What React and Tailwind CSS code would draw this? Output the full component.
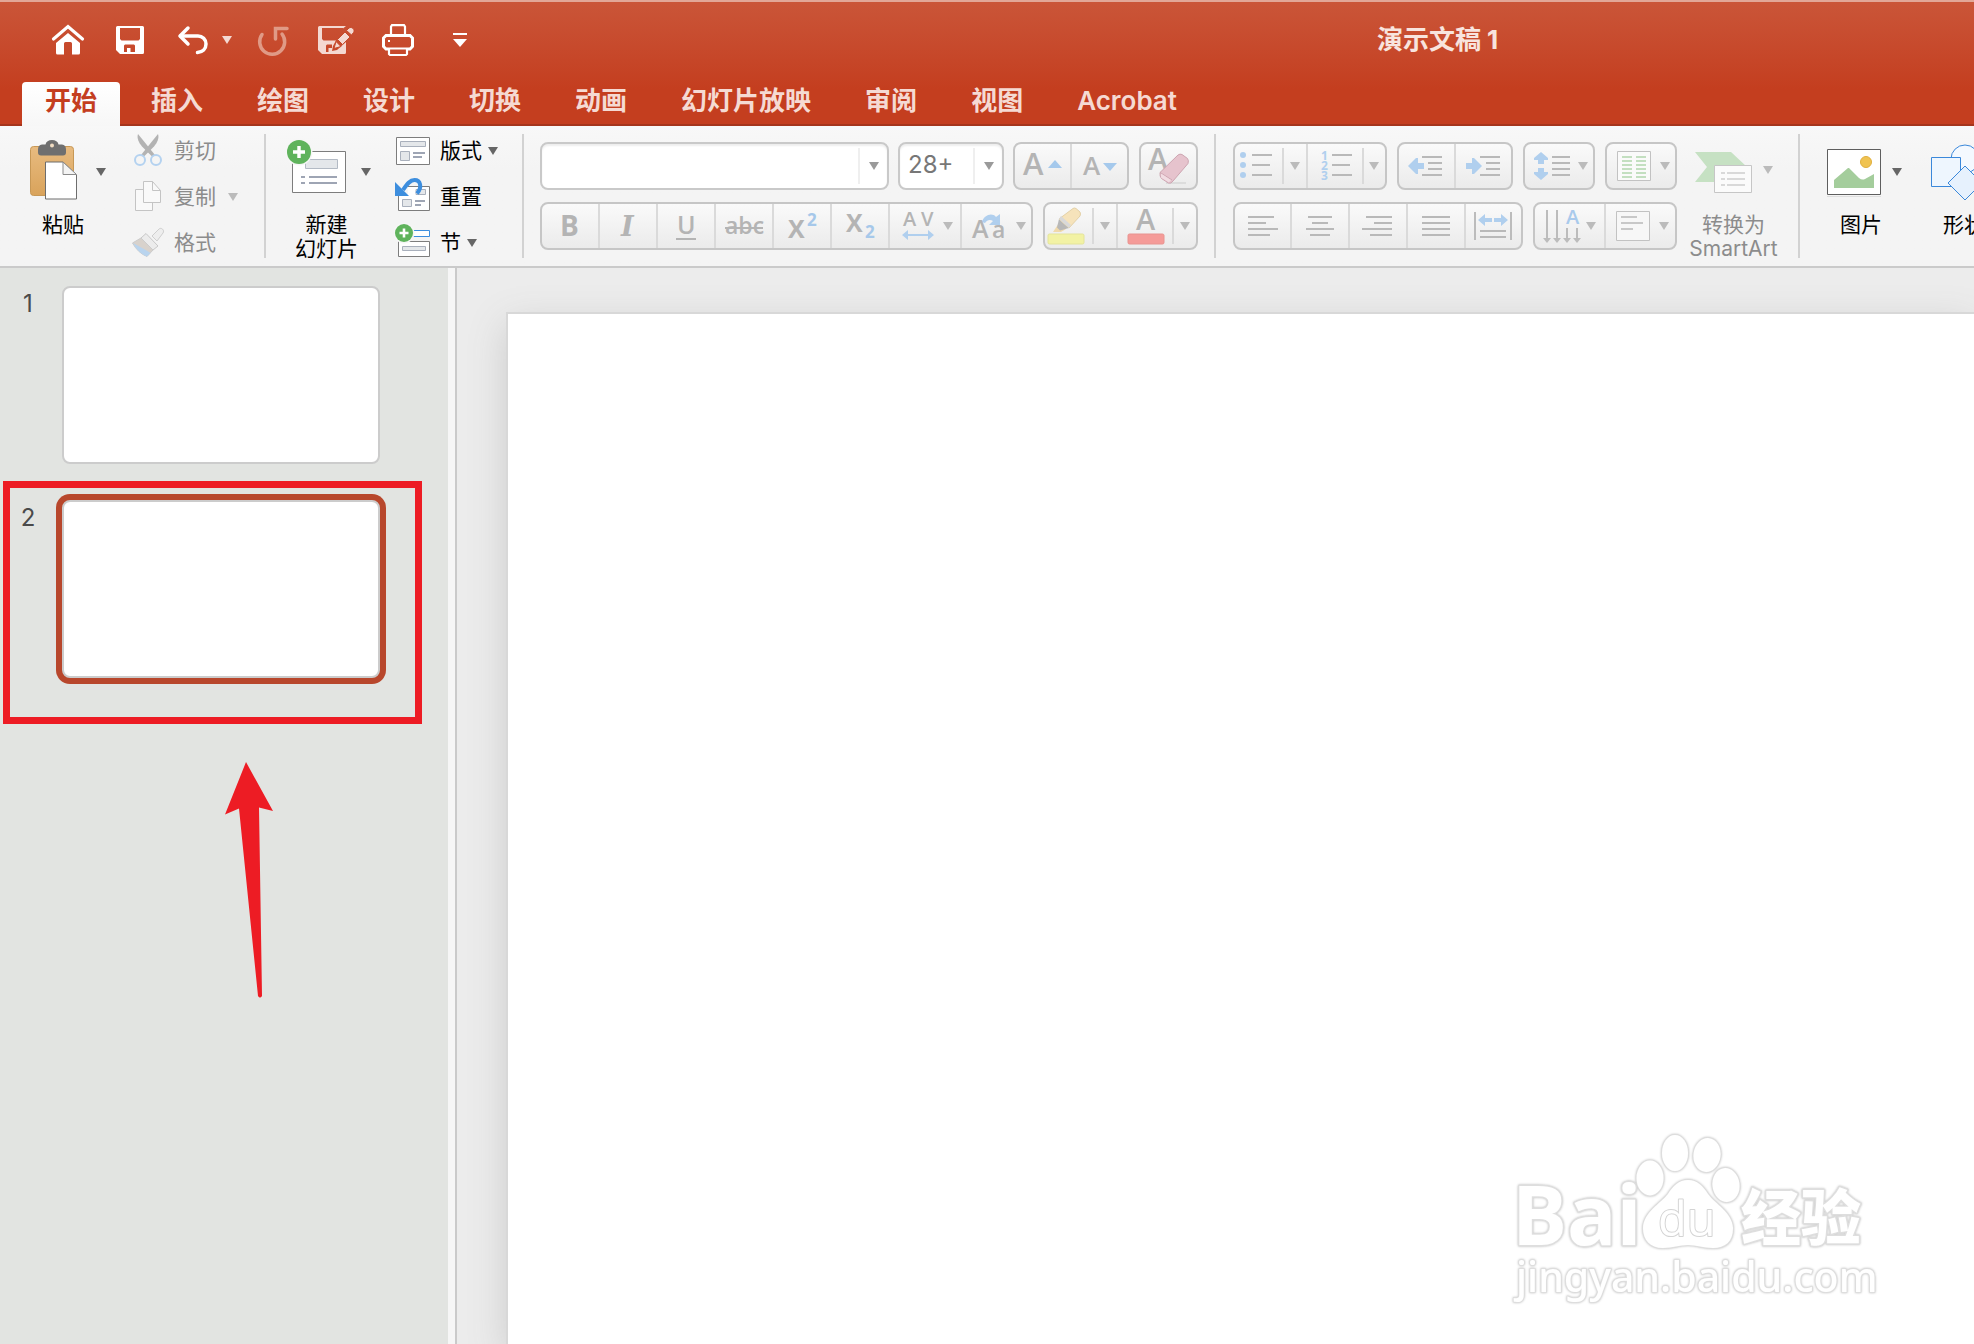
import React, { useState } from 'react'

const TABS = ['开始', '插入', '绘图', '设计', '切换', '动画', '幻灯片放映', '审阅', '视图', 'Acrobat']

const GREY = '#b4b4b4'
const BLUE = '#b0cfee'
const SANS = '"Open Sans", "Liberation Sans", sans-serif'

function Caret({ className = 'text-[#666666]' }) {
  return (
    <svg width="10" height="8" viewBox="0 0 10 8" className={'shrink-0 ' + className}>
      <path d="M0 0h10L5 8z" fill="currentColor" />
    </svg>
  )
}

function Icon({ w, h = 44, children }) {
  return (
    <svg width={w} height={h} viewBox={`0 0 ${w} ${h}`} fill="none" className="shrink-0 overflow-visible" aria-hidden="true">
      {children}
    </svg>
  )
}

function Letter({ x, y, size, color = GREY, weight = 600, family = SANS, children, ...rest }) {
  return (
    <text x={x} y={y} fontSize={size} fill={color} fontWeight={weight} fontFamily={family} {...rest}>
      {children}
    </text>
  )
}

// horizontal strokes given as [x1, x2, y]
function Lines({ rows, color = '#b9b9b9', width = 2 }) {
  return rows.map(([x1, x2, y], i) => (
    <path key={i} d={`M${x1} ${y}H${x2}`} stroke={color} strokeWidth={width} />
  ))
}

/* ---------- title bar ---------- */

function HomeIcon() {
  return (
    <Icon w={32} h={32}>
      <path d="M1.5 15 16 2.5 30.5 15" stroke="white" strokeWidth="3.2" strokeLinecap="round" />
      <path d="M4 19 16 9l12 10v10a1.500 1.500 0 0 1-1.500 1.500H20V19.500a1.500 1.500 0 0 0-1.500-1.500h-5a1.500 1.500 0 0 0-1.500 1.500v11H5.500A1.500 1.500 0 0 1 4 29z" fill="white" />
    </Icon>
  )
}

function SaveIcon() {
  return (
    <Icon w={28} h={28}>
      <path fillRule="evenodd" fill="white" d="M1.500 0h25A1.500 1.500 0 0 1 28 1.500v25a1.500 1.500 0 0 1-1.500 1.500H4l-4-4V1.500A1.500 1.500 0 0 1 1.500 0zM4 2v11l1.500 1.500h17L24 13V2zM8 26h3v-4h3.500v4H19v-6.500L18 18.500H9l-1 1z" />
    </Icon>
  )
}

function UndoIcon() {
  return (
    <Icon w={30} h={30}>
      <path d="M10 3 2 11l8 8" stroke="white" strokeWidth="3.500" strokeLinecap="round" strokeLinejoin="round" />
      <path d="M2.500 11H20a8 8 0 0 1 8 8c0 5-3.500 8-8.500 8.500" stroke="white" strokeWidth="3.500" strokeLinecap="round" />
    </Icon>
  )
}

function RedoIcon() {
  return (
    <Icon w={30} h={30}>
      <path d="M4 9.500A12.500 12.500 0 1 0 24 9M29 3.500H17.500V14" stroke="#e09a86" strokeWidth="3.500" strokeLinecap="round" />
    </Icon>
  )
}

function SaveAsIcon() {
  return (
    <Icon w={36} h={28}>
      <path fillRule="evenodd" fill="#f4d9d2" d="M1.500 0H28l-3 2.500V2H4v11l1.500 1.500H18L15 20l-1 5 5-1 9-8v10.500a1.500 1.500 0 0 1-1.500 1.500H4l-4-4V1.500A1.500 1.500 0 0 1 1.500 0zM8 26h2.500v-4H14v-3.500H9l-1 1z" />
      <path d="M16 22.500 18 15.500l5 5zM19.500 13.500 27 6l5 5-7.500 7.500zM28.500 4.500 31 2c1.500-1 3-.5 4 .5s1.500 2.500.5 4L33.500 9z" fill="#f4d9d2" stroke="#c64b2c" strokeWidth="1" />
    </Icon>
  )
}

function PrintIcon() {
  return (
    <Icon w={32} h={32}>
      <path d="M9 11V2.500L10 1.200h12l1 1.300V11" stroke="white" strokeWidth="2.200" />
      <path d="M6 25H4l-2.500-2.500V14L4 11.500h24l2.500 2.500v8.500L28 25h-2" stroke="white" strokeWidth="3" />
      <path d="M7 24.500V30l1 1h16l1-1v-5.500z" stroke="white" strokeWidth="2.200" />
      <path d="M6 16h2v2H6z" fill="white" />
    </Icon>
  )
}

function TitleBar() {
  return (
    <div className="flex h-20 shrink-0 items-center pb-1 pl-13 text-white">
      <button aria-label="主页"><HomeIcon /></button>
      <button aria-label="保存" className="ml-8"><SaveIcon /></button>
      <button aria-label="撤销" className="ml-[34px]"><UndoIcon /></button>
      <button aria-label="撤销选项" className="ml-[14px]"><Caret className="text-[#f4d9d2]" /></button>
      <button aria-label="重做" className="ml-[26px]"><RedoIcon /></button>
      <button aria-label="另存为" className="ml-[30px]"><SaveAsIcon /></button>
      <button aria-label="打印" className="ml-7"><PrintIcon /></button>
      <button aria-label="自定义快速访问工具栏" className="ml-[39px]">
        <Icon w={14} h={16}>
          <path d="M0 2h14" stroke="white" strokeWidth="2" />
          <path d="M0 7h14l-7 8z" fill="white" />
        </Icon>
      </button>
      <h1 className="ml-[910px] flex gap-1.5 text-[26px] leading-8 font-bold whitespace-nowrap text-[#f8e4de]">
        <span>演示文稿</span>
        <span>1</span>
      </h1>
    </div>
  )
}

function TabBar({ active, setActive }) {
  return (
    <nav className="flex h-11 shrink-0 gap-2 pl-[22px] shadow-[inset_0_-2px_0_#a5351c]">
      {TABS.map(tab => (
        <button
          key={tab}
          onClick={() => setActive(tab)}
          className={
            'h-11 rounded-t px-[23px] pb-1.5 text-[26px] leading-9 font-semibold whitespace-nowrap ' +
            (tab === active ? 'bg-linear-to-b from-white to-[#f7f7f7] text-[#c43e1f]' : 'text-[#f5dad3]')
          }
        >
          {tab}
        </button>
      ))}
    </nav>
  )
}

/* ---------- ribbon parts ---------- */

function Section({ className = '', last, children }) {
  return (
    <section className={'flex h-[124px] shrink-0 ' + (last ? '' : 'border-r-2 border-[#d2d2d2] ') + className}>
      {children}
    </section>
  )
}

function Group({ className = '', children }) {
  return (
    <div className={'flex h-12 shrink-0 rounded-lg border-2 border-[#c6c6c6] bg-linear-to-b from-[#fafafa] to-[#ebebeb] ' + className}>
      {children}
    </div>
  )
}

function Cell({ label, divided, caret, className = '', children }) {
  return (
    <button aria-label={label} className={'flex h-11 shrink-0 items-center ' + (divided ? 'border-l-2 border-[#dadada] ' : '') + className}>
      {children}
      {caret && <Caret className="text-[#bbbbbb]" />}
    </button>
  )
}

function SplitCaret({ label }) {
  return (
    <button aria-label={label} className="flex h-11 flex-1 items-center justify-center">
      <span className="h-9 w-0.5 bg-[#dadada]" />
      <span className="flex flex-1 justify-center"><Caret className="text-[#bbbbbb]" /></span>
    </button>
  )
}

function Combo({ label, value, onChange, className }) {
  return (
    <div className={'flex h-12 shrink-0 items-center rounded-lg border-2 border-[#c9c9c9] bg-white shadow-[inset_0_2px_2px_#eeeeee] ' + className}>
      <input
        aria-label={label}
        value={value}
        onChange={e => onChange(e.target.value)}
        className="h-10 min-w-0 flex-1 bg-transparent pb-1 pl-2 text-2xl text-[#777777] outline-none"
      />
      <span className="h-9 w-0.5 bg-[#efefef]" />
      <button aria-label={label + '选项'} className="flex h-10 w-[27px] items-center justify-center">
        <Caret className="text-[#9a9a9a]" />
      </button>
    </div>
  )
}

function SmallButton({ icon, caret, disabled, children }) {
  return (
    <button className={'flex h-[34px] items-center text-[21px] leading-6 ' + (disabled ? 'text-[#8c8c8c]' : 'text-black')}>
      {icon}
      <span className="ml-2.5">{children}</span>
      {caret && (
        <span className={disabled ? 'ml-3' : 'ml-1.5'}>
          <Caret className={disabled ? 'text-[#bbbbbb]' : 'text-[#666666]'} />
        </span>
      )}
    </button>
  )
}

/* ---------- clipboard and slides ---------- */

function PasteIcon() {
  return (
    <Icon w={47} h={60}>
      <defs>
        <linearGradient id="board" x1="0" y1="0" x2="0" y2="1">
          <stop offset="0" stopColor="#e8bb80" />
          <stop offset="1" stopColor="#d9a35b" />
        </linearGradient>
      </defs>
      <rect x="0.500" y="6.500" width="43" height="49" rx="3" fill="url(#board)" stroke="#c79856" />
      <path d="M12 4.500h3.500C16 1.500 18.500 0 22 0s6 1.500 6.500 4.500H32q4 .5 4 5v3q0 3-3 3H11q-3 0-3-3v-3q0-4.500 4-5z" fill="#6f6f6f" />
      <circle cx="22" cy="5.500" r="2" fill="#f0dcc2" />
      <path d="M15.500 22h17.500L46.500 35v24h-31z" fill="white" stroke="#6d6d6d" />
      <path d="M33 22v12.500h13.500z" fill="#f4f4f4" stroke="#8a8a8a" />
    </Icon>
  )
}

function CutIcon() {
  return (
    <Icon w={32} h={34}>
      <path d="M6 0C4.500 4 7 9 10 12.500L20.500 23l2.500-2z" fill="#b3b3b3" />
      <path d="M26 0c1.500 4-1 9-4 12.500L11.500 23 9 21z" fill="#b3b3b3" />
      <circle cx="8" cy="26" r="5" stroke="#b4d2f0" strokeWidth="2" />
      <circle cx="24" cy="26" r="5" stroke="#b4d2f0" strokeWidth="2" />
    </Icon>
  )
}

function CopyIcon() {
  return (
    <Icon w={32} h={34}>
      <path d="M3.500 9.500h17v21h-17z" fill="#f9f9f9" stroke="#c4c4c4" />
      <path d="M11.500 1.500h9l8 9v12h-17z" fill="#f9f9f9" stroke="#c4c4c4" />
      <path d="M20.500 1.500v9h8" stroke="#c4c4c4" />
    </Icon>
  )
}

function BrushIcon() {
  return (
    <Icon w={32} h={34}>
      <path d="M20 10 27 3c2-2 6 1 4 4l-6 8z" fill="#eeeeee" stroke="#cfcfcf" />
      <path d="M14 7.500 26 20l-5 4L9 12z" fill="#ececec" stroke="#c8c8c8" />
      <path d="M9 12 21 24l-6 6.500Q6 27 .5 17z" fill="#d8d2cc" stroke="#cccccc" />
      <path d="M1 17c5 3 12 6 17.500 10L15 30.500Q6 27 1 17z" fill="#b9d4ee" />
    </Icon>
  )
}

function PlusBadge({ cx, cy, r }) {
  return (
    <>
      <circle cx={cx} cy={cy} r={r + 1.5} fill="#f6f6f6" />
      <circle cx={cx} cy={cy} r={r} fill="#5fb35c" />
      <path d={`M${cx - r / 2} ${cy}h${r}M${cx} ${cy - r / 2}v${r}`} stroke="white" strokeWidth={r / 3.5} />
    </>
  )
}

function NewSlideIcon() {
  return (
    <Icon w={59} h={60}>
      <path d="M5.500 11.500h53v41h-53z" fill="white" stroke="#7d7d7d" />
      <path d="M18.500 19.500h32v9h-32z" fill="#e4e7ea" stroke="#b3bac4" />
      <Lines color="#9ea5b4" rows={[[14, 18, 37], [22, 50, 37], [14, 18, 43], [22, 50, 43]]} />
      <PlusBadge cx={12} cy={12} r={12} />
    </Icon>
  )
}

function LayoutIcon() {
  return (
    <Icon w={34} h={34}>
      <path d="M.5 3.500h33v27H.5z" fill="white" stroke="#7d7d7d" />
      <path d="M4.500 7.500h25v5h-25zM4.500 17.500h9v9h-9z" fill="#e4e7ea" stroke="#a9b0bc" />
      <Lines color="#9ea5b4" rows={[[17, 29, 19], [17, 26, 23]]} />
    </Icon>
  )
}

function ResetIcon() {
  return (
    <Icon w={34} h={34}>
      <path d="M2.500 6.500h31v24h-31z" fill="white" stroke="#7d7d7d" />
      <path d="M20 9.500h9.500v5H20zM6.500 19.500h9v7h-9z" fill="#e4e7ea" stroke="#a9b0bc" />
      <Lines color="#9ea5b4" rows={[[19, 29, 21], [19, 25, 25]]} />
      <path d="M0 0h12v15H0z" fill="#f6f6f6" />
      <path d="M7 10C11 4 14 0 18.500 0c6 0 8 7 2.500 13.500" stroke="#3d8ede" strokeWidth="4" />
      <path d="M-1 2v14h14z" fill="#3d8ede" />
    </Icon>
  )
}

function SectionIcon() {
  return (
    <Icon w={34} h={34}>
      <path d="M14 4.500h19.500v6H14z" fill="white" stroke="#3d8ede" />
      <path d="M2.500 15.500h31v15h-31z" fill="white" stroke="#7d7d7d" />
      <path d="M6.500 20.500h23v4h-23z" fill="#e4e7ea" stroke="#a9b0bc" />
      <PlusBadge cx={8} cy={7} r={9} />
    </Icon>
  )
}

/* ---------- font section ---------- */

function FontControls() {
  const [font, setFont] = useState('')
  const [size, setSize] = useState('28+')

  return (
    <div className="flex flex-col gap-3 pt-2">
      <div className="flex">
        <Combo label="字体" value={font} onChange={setFont} className="w-[349px]" />
        <Combo label="字号" value={size} onChange={setSize} className="ml-[9px] w-[106px]" />
        <Group className="ml-[9px]">
          <Cell label="增大字号">
            <Icon w={55}>
              <Letter x={8} y={31} size={31}>A</Letter>
              <path d="M33 24h14l-7-8z" fill="#a5c9ec" />
            </Icon>
          </Cell>
          <Cell label="减小字号" divided>
            <Icon w={55}>
              <Letter x={11} y={31} size={26}>A</Letter>
              <path d="M31 19h14l-7 8z" fill="#a5c9ec" />
            </Icon>
          </Cell>
        </Group>
        <Group className="ml-2.5">
          <Cell label="清除格式">
            <Icon w={55}>
              <Letter x={7} y={26} size={30}>A</Letter>
              <path d="M25 39h20" stroke="#dcdcdc" strokeWidth="2" />
              <path d="M37 11q2-1.500 4-.5l5.500 4q1.500 2 .5 5L32 37q-2 3-4.500 2l-7-4.500q-2-2-1.500-6z" fill="#e6c3cd" stroke="#cda5b1" />
              <path d="M19 28.500 31 36" stroke="#cda5b1" />
              <path d="M20 29.500 30 36l-2 2.500-8-5z" fill="#f1dce2" />
            </Icon>
          </Cell>
        </Group>
      </div>

      <div className="flex">
        <Group>
          <Cell label="加粗">
            <Icon w={56}><Letter x={18} y={32} size={28} weight={700}>B</Letter></Icon>
          </Cell>
          <Cell label="倾斜" divided>
            <Icon w={56}><Letter x={21} y={32} size={27} weight={700} family='"DejaVu Serif", serif' fontStyle="italic">I</Letter></Icon>
          </Cell>
          <Cell label="下划线" divided>
            <Icon w={56}>
              <Letter x={19} y={30} size={25}>U</Letter>
              <Lines color={GREY} rows={[[18, 38, 35]]} />
            </Icon>
          </Cell>
          <Cell label="删除线" divided>
            <Icon w={56}>
              <Letter x={9} y={30} size={23}>abc</Letter>
              <Lines color={GREY} rows={[[9, 47, 24]]} />
            </Icon>
          </Cell>
          <Cell label="上标" divided>
            <Icon w={56}>
              <Letter x={14} y={34} size={25} weight={700}>X</Letter>
              <Letter x={33} y={22} size={17} weight={700} color="#a6c8ea">2</Letter>
            </Icon>
          </Cell>
          <Cell label="下标" divided>
            <Icon w={56}>
              <Letter x={14} y={28} size={25} weight={700}>X</Letter>
              <Letter x={33} y={34} size={17} weight={700} color="#a6c8ea">2</Letter>
            </Icon>
          </Cell>
          <Cell label="字符间距" divided caret className="w-[72px]">
            <Icon w={53}>
              <Letter x={13} y={22} size={20}>A</Letter>
              <Letter x={31} y={22} size={20}>V</Letter>
              <path d="M12 31l6-5v4h20v-4l6 5-6 5v-4H18v4z" fill={BLUE} />
            </Icon>
          </Cell>
          <Cell label="更改大小写" divided caret className="w-[71px]">
            <Icon w={54}>
              <path d="M20 18C22 11 30 8 34 13l4-3v11H27l4-4c-3-2-6-1-8 2z" fill={BLUE} />
              <Letter x={10} y={34} size={25}>A</Letter>
              <Letter x={30} y={34} size={23}>a</Letter>
            </Icon>
          </Cell>
        </Group>
        <Group className="ml-2.5 w-[155px]">
          <Cell label="突出显示颜色">
            <Icon w={47}>
              <path d="m8 28 6-9 7 6-5 3z" fill="#f0d9ab" />
              <path d="m14 15 10 9-9 2.500-3-3z" fill="#b8b8b8" />
              <path d="M28 4.500q1-1 3 0L35 8q1 2 0 4L24 24 14 15z" fill="#f6e3bb" stroke="#e3d1a8" />
              <path d="m14 15 10 9 2-3-10-9z" fill="#d9d9d9" />
              <rect x="3" y="30" width="36" height="10" rx="1.500" fill="#f2f2a4" stroke="#e4e49a" />
            </Icon>
          </Cell>
          <SplitCaret label="突出显示颜色选项" />
          <Cell label="字体颜色" divided>
            <Icon w={54}>
              <Letter x={18} y={26} size={29}>A</Letter>
              <rect x="10" y="30" width="36" height="10" rx="1.500" fill="#f59b98" stroke="#e89490" />
            </Icon>
          </Cell>
          <SplitCaret label="字体颜色选项" />
        </Group>
      </div>
    </div>
  )
}

/* ---------- paragraph section ---------- */

function DownArrow({ x, y }) {
  return (
    <>
      <path d={`M${x} ${y}V35`} stroke="#bcbcbc" strokeWidth="2" />
      <path d={`M${x - 4} 34h8l-4 5z`} fill="#bcbcbc" />
    </>
  )
}

function ParagraphControls() {
  return (
    <div className="flex flex-col gap-3 pt-2">
      <div className="flex gap-2.5">
        <Group className="w-[154px]">
          <Cell label="项目符号">
            <Icon w={47}>
              {[11, 21, 31].map(y => <circle key={y} cx="8" cy={y} r="3" fill={BLUE} />)}
              <Lines rows={[[17, 37, 11], [17, 35, 21], [17, 37, 31]]} />
            </Icon>
          </Cell>
          <SplitCaret label="项目符号选项" />
          <Cell label="编号" divided>
            <Icon w={54}>
              {[1, 2, 3].map(n => <Letter key={n} x={13} y={6 + n * 10} size={12} weight={700} color={BLUE}>{n}</Letter>)}
              <Lines rows={[[24, 44, 11], [24, 42, 21], [24, 44, 31]]} />
            </Icon>
          </Cell>
          <SplitCaret label="编号选项" />
        </Group>
        <Group>
          <Cell label="减少缩进量">
            <Icon w={55}>
              <path d="m9 22 8-8h2v5h6v6h-6v5h-2z" fill={BLUE} />
              <Lines rows={[[23, 43, 13], [29, 43, 19], [29, 43, 25], [23, 43, 31]]} />
            </Icon>
          </Cell>
          <Cell label="增加缩进量" divided>
            <Icon w={55}>
              <path d="m26 22-8-8h-2v5h-6v6h6v5h2z" fill={BLUE} />
              <Lines rows={[[24, 44, 13], [30, 44, 19], [30, 44, 25], [24, 44, 31]]} />
            </Icon>
          </Cell>
        </Group>
        <Group className="w-[72px]">
          <Cell label="行距" caret>
            <Icon w={53}>
              <path d="m16 8 7 6v2h-4v4h-6v-4H9v-2zM16 36l7-6v-2h-4v-4h-6v4H9v2z" fill={BLUE} />
              <Lines rows={[[27, 45, 13], [27, 45, 19], [27, 45, 25], [27, 45, 31]]} />
            </Icon>
          </Cell>
        </Group>
        <Group className="w-[72px]">
          <Cell label="分栏" caret>
            <Icon w={53}>
              <path d="M10.500 7.500h33v29h-33z" fill="#fafafa" stroke="#c2c2c2" />
              <Lines color="#c3dfc0" rows={[13, 17, 21, 25, 29, 33].flatMap(y => [[15, 25, y], [29, 39, y]])} />
            </Icon>
          </Cell>
        </Group>
      </div>

      <div className="flex gap-2.5">
        <Group>
          <Cell label="左对齐">
            <Icon w={55}><Lines rows={[[13, 39, 13], [13, 31, 19], [13, 43, 25], [13, 35, 31]]} /></Icon>
          </Cell>
          <Cell label="居中" divided>
            <Icon w={56}><Lines rows={[[16, 40, 13], [20, 36, 19], [14, 42, 25], [18, 38, 31]]} /></Icon>
          </Cell>
          <Cell label="右对齐" divided>
            <Icon w={56}><Lines rows={[[16, 42, 13], [24, 42, 19], [12, 42, 25], [20, 42, 31]]} /></Icon>
          </Cell>
          <Cell label="两端对齐" divided>
            <Icon w={56}><Lines rows={[[14, 42, 13], [14, 42, 19], [14, 42, 25], [14, 42, 31]]} /></Icon>
          </Cell>
          <Cell label="分散对齐" divided>
            <Icon w={55}>
              <path d="M9 8v28M45 8v28" stroke="#bcbcbc" strokeWidth="2" />
              <path d="m12 16 7-6v4h7v4h-7v4zM42 16l-7-6v4h-7v4h7v4z" fill={BLUE} />
              <Lines rows={[[14, 40, 27], [14, 40, 33]]} />
            </Icon>
          </Cell>
        </Group>
        <Group>
          <Cell label="文字方向" caret className="w-[69px]">
            <Icon w={51}>
              <DownArrow x={12} y={6} />
              <DownArrow x={22} y={6} />
              <DownArrow x={32} y={24} />
              <DownArrow x={42} y={24} />
              <Letter x={31} y={20} size={20} color="#a9caec">A</Letter>
            </Icon>
          </Cell>
          <Cell label="对齐文本" divided caret className="w-[71px]">
            <Icon w={53}>
              <path d="M10.500 7.500h33v29h-33z" fill="#f7f7f7" stroke="#c2c2c2" />
              <Lines color="#c8c8c8" rows={[[15, 31, 13], [15, 37, 19], [15, 27, 25]]} />
            </Icon>
          </Cell>
        </Group>
      </div>
    </div>
  )
}

/* ---------- insert section ---------- */

function SmartArtIcon() {
  return (
    <Icon w={57} h={60}>
      <path d="M0 12h36l16 15-16 15H0l12-15z" fill="#c6e1c3" />
      <path d="M19.500 25.500h37v27h-37z" fill="#fbfbfb" stroke="#c6c6c6" />
      <Lines color="#d9d9d9" rows={[33, 39, 45].flatMap(y => [[26, 30, y], [32, 50, y]])} />
    </Icon>
  )
}

function PictureIcon() {
  return (
    <Icon w={54} h={60}>
      <path d="M0 56.500h54" stroke="#dedede" />
      <path d="M.5 9.500h53v45H.5z" fill="white" stroke="#5e5e5e" />
      <circle cx="39" cy="22" r="5.500" fill="#f0c351" stroke="#e0ae3c" />
      <path d="M7 40 21 28h1l10 10q3 2.500 6 1l9-5v14H7z" fill="#a4cd9c" />
    </Icon>
  )
}

function ShapesIcon() {
  return (
    <Icon w={54} h={60}>
      <circle cx="34" cy="19" r="14" fill="#f4f9ff" stroke="#3b88da" />
      <path d="M.5 17.500h29v29H.5z" fill="#eef6fe" stroke="#3b88da" />
      <path d="M34 26 51 43 34 60 17 43z" fill="#e6f1fd" stroke="#3b88da" strokeLinejoin="round" />
    </Icon>
  )
}

function Ribbon() {
  return (
    <div className="flex shrink-0 overflow-hidden border-b-2 border-[#cacaca] bg-linear-to-b from-[#f8f8f8] to-[#f4f4f4] to-30% py-2">
      <Section className="w-[266px] pl-[30px]">
        <button className="flex w-[66px] flex-col pt-1.5">
          <PasteIcon />
          <span className="mt-[13px] self-center text-[21px] leading-6">粘贴</span>
        </button>
        <button aria-label="粘贴选项" className="h-[72px] pt-1"><Caret /></button>
        <div className="ml-[26px] flex flex-col gap-3">
          <SmallButton disabled icon={<CutIcon />}>剪切</SmallButton>
          <SmallButton disabled caret icon={<CopyIcon />}>复制</SmallButton>
          <SmallButton disabled icon={<BrushIcon />}>格式</SmallButton>
        </div>
      </Section>

      <Section className="w-[258px] pl-[21px]">
        <button className="flex w-[71px] flex-col pt-1.5">
          <NewSlideIcon />
          <span className="mt-[13px] self-end text-center text-[21px] leading-6">新建<br />幻灯片</span>
        </button>
        <button aria-label="新建幻灯片选项" className="ml-[3px] h-[72px] pt-1"><Caret /></button>
        <div className="ml-[25px] flex flex-col gap-3">
          <SmallButton caret icon={<LayoutIcon />}>版式</SmallButton>
          <SmallButton icon={<ResetIcon />}>重置</SmallButton>
          <SmallButton caret icon={<SectionIcon />}>节</SmallButton>
        </div>
      </Section>

      <Section className="px-4">
        <FontControls />
      </Section>

      <Section className="pr-5 pl-[17px]">
        <ParagraphControls />
        <button className="ml-3 flex w-[89px] flex-col items-center pt-1.5 text-[#8c8c8c]">
          <span className="flex items-center gap-[11px]">
            <SmartArtIcon />
            <Caret className="text-[#bbbbbb]" />
          </span>
          <span className="mt-[13px] text-[21px] leading-6">转换为<br />SmartArt</span>
        </button>
      </Section>

      <Section last className="pl-[27px]">
        <button className="flex w-[55px] flex-col pt-1.5">
          <PictureIcon />
          <span className="mt-[13px] self-end text-[21px] leading-6">图片</span>
        </button>
        <button aria-label="图片选项" className="ml-2.5 h-[72px] pt-1"><Caret /></button>
        <button className="ml-[29px] flex flex-col pt-1.5">
          <ShapesIcon />
          <span className="mt-[13px] self-end text-[21px] leading-6">形状</span>
        </button>
      </Section>
    </div>
  )
}

/* ---------- slide list and canvas ---------- */

function SlideList({ selected, setSelected }) {
  return (
    <aside className="relative w-[448px] shrink-0 bg-[#e2e4e1] pt-[18px]">
      <ol className="flex flex-col gap-9">
        {[1, 2].map(n => (
          <li key={n} className="flex">
            <span className="w-[62px] pr-1.5 text-center text-2xl leading-9 text-[#4a4a4a]">{n}</span>
            <button
              aria-label={'幻灯片 ' + n}
              onClick={() => setSelected(n)}
              className={
                'h-[178px] w-[318px] rounded-lg border-2 border-[#cccccc] bg-white ' +
                (n === selected ? 'shadow-[0_0_0_6px_#b8472c]' : '')
              }
            />
          </li>
        ))}
      </ol>

      <div className="absolute top-[213px] left-[3px] h-[243px] w-[419px] border-7 border-[#ed1c24]" />
      <svg width="50" height="238" viewBox="0 0 50 238" className="absolute top-[494px] left-[224px]">
        <path d="M22 0 49 49 35 45.500 38 234q-2 3-4 0L15 46.500 1 52.500z" fill="#ed1c24" />
      </svg>
    </aside>
  )
}

function Watermark() {
  const outline = { fill: 'white', stroke: '#dedede', strokeWidth: 3, paintOrder: 'stroke', strokeLinejoin: 'round' }
  return (
    <svg width="370" height="190" viewBox="0 0 370 190" className="absolute top-[809px] left-[1002px] drop-shadow-[0_0_1px_#c4c4c4]">
      <text x="2" y="122" fontSize="82" fontWeight="700" fontFamily={SANS} {...outline}>Bai</text>
      <g {...outline} strokeWidth="2">
        <ellipse cx="140" cy="55" rx="13.500" ry="17.500" />
        <ellipse cx="165" cy="30" rx="13" ry="18" />
        <ellipse cx="197" cy="32" rx="13.500" ry="17" transform="rotate(8 197 32)" />
        <ellipse cx="216" cy="62" rx="13.500" ry="17" transform="rotate(-8 216 62)" />
        <path d="M178 57c9 0 15 6 20 14 7 10 24 18 25 34 0 14-8 20-20 20-10 0-16-3-25-3s-15 3-25 3c-13 0-20-8-20-20 1-16 17-24 25-34 5-8 11-14 20-14z" />
      </g>
      <text x="148" y="113" fontSize="47" fontFamily={SANS} {...outline} stroke="#d4d4d4" strokeWidth="2">du</text>
      <text x="231" y="117" fontSize="60" fontWeight="900" fontFamily='"Noto Sans CJK SC", sans-serif' {...outline}>经验</text>
      <text x="6" y="169" fontSize="41" fontWeight="500" fontFamily='"Noto Sans", sans-serif' {...outline} strokeWidth="2">jingyan.baidu.com</text>
    </svg>
  )
}

export default function App() {
  const [tab, setTab] = useState('开始')
  const [slide, setSlide] = useState(2)

  return (
    <div className='flex h-screen flex-col overflow-hidden font-[Inter,"Noto_Sans_CJK_SC",sans-serif]'>
      <header className="flex shrink-0 flex-col overflow-hidden border-t-2 border-[#e2a797] bg-linear-to-b from-[#ca5538] to-[#c43e1f] to-70%">
        <TitleBar />
        <TabBar active={tab} setActive={setTab} />
      </header>
      <Ribbon />
      <div className="flex min-h-0 flex-1">
        <SlideList selected={slide} setSelected={setSlide} />
        <div className="w-[9px] shrink-0 border-r-2 border-[#cacaca] bg-[#f6f6f6]" />
        <main className="min-w-0 flex-1 overflow-hidden bg-[#ececec] pt-11 pl-[49px]">
          <div className="relative h-full border-t-2 border-l-2 border-[#d8d8d8] bg-white shadow-[0_12px_36px_#cccccc]">
            <Watermark />
          </div>
        </main>
      </div>
    </div>
  )
}
